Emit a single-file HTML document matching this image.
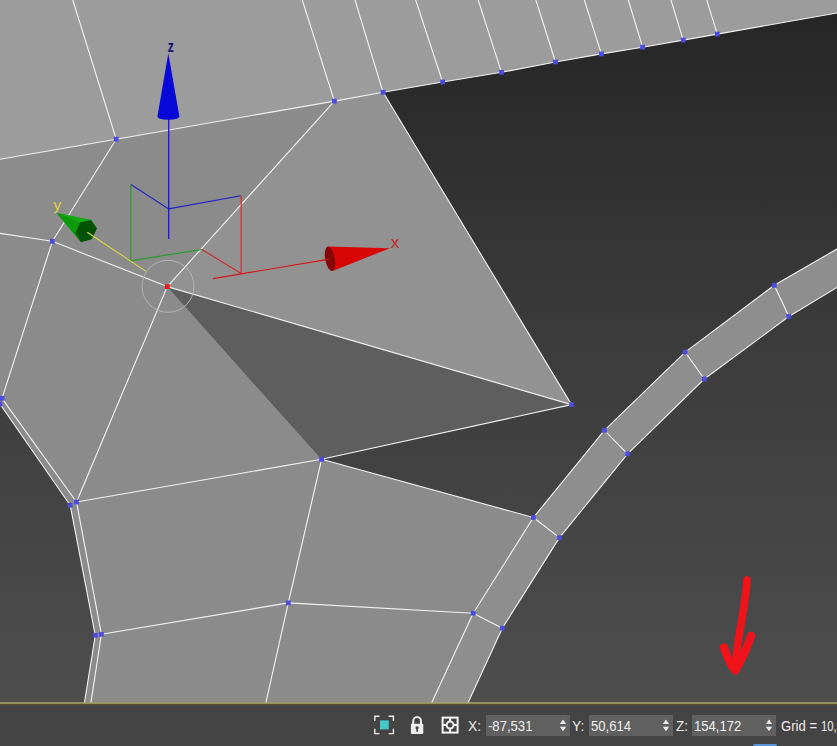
<!DOCTYPE html>
<html><head><meta charset="utf-8"><title>viewport</title>
<style>
html,body{margin:0;padding:0;background:#444;}
body{width:837px;height:746px;overflow:hidden;position:relative;font-family:"Liberation Sans",sans-serif;}
svg{position:absolute;left:0;top:0;display:block}
.bar{position:absolute;left:0;top:705px;width:837px;height:41px;background:#444444;}
.lbl{position:absolute;top:716.6px;height:18px;line-height:18px;font-size:14.4px;color:#ececec;white-space:nowrap;transform:scaleX(0.91);transform-origin:0 50%}
.box{position:absolute;top:714.6px;height:21.4px;background:#606060;box-sizing:border-box;white-space:nowrap}
.box span{position:absolute;left:2.4px;top:0;color:#f0f0f0;font-size:14.4px;line-height:22.4px;transform:scaleX(0.91);transform-origin:0 50%;display:block}
</style></head><body>
<svg width="837" height="746" viewBox="0 0 837 746">
<defs>
<linearGradient id="bg" x1="0" y1="0" x2="0" y2="703" gradientUnits="userSpaceOnUse">
<stop offset="0" stop-color="#252525"/><stop offset="0.47" stop-color="#3b3b3b"/><stop offset="1" stop-color="#4e4e4e"/></linearGradient>
</defs>
<rect x="0" y="0" width="837" height="704" fill="url(#bg)"/>

<polygon points="0.0,0.0 837.0,0.0 837.0,13.0 717.3,34.1 683.2,40.1 642.6,47.2 601.4,53.9 555.5,62.0 501.5,72.3 442.6,82.0 383.1,92.3 334.4,101.1 116.2,139.2 0.0,159.3" fill="#9c9c9c"/>
<polygon points="0.0,159.3 116.2,139.2 52.4,241.3 0.0,233.4" fill="#8c8c8c"/>
<polygon points="116.2,139.2 334.4,101.1 167.3,286.6 52.4,241.3" fill="#8b8b8b"/>
<polygon points="334.4,101.1 383.1,92.3 571.5,404.6 167.3,286.6" fill="#929292"/>
<polygon points="167.3,286.6 571.5,404.6 321.6,459.3" fill="#5e5e5e"/>
<polygon points="0.0,233.4 52.4,241.3 167.3,286.6 321.6,459.3 533.4,517.5 473.2,613.2 431.3,703.5 84.3,703.5 95.3,635.3 70.2,505.2 0.0,404.0" fill="#8b8b8b"/>
<polygon points="837.0,249.0 774.3,285.3 685.2,352.1 604.4,430.4 533.4,517.5 473.2,613.2 431.3,703.5 467.7,703.5 502.3,628.2 559.5,537.6 627.6,453.8 704.3,379.0 788.8,316.5 837.0,287.4" fill="#8e8e8e"/>
<g stroke="#f2f2f2" stroke-width="1.12" fill="none" stroke-linecap="round" stroke-linejoin="round">
<polyline points="0.0,159.3 116.2,139.2 334.4,101.1 383.1,92.3 442.6,82.0 501.5,72.3 555.5,62.0 601.4,53.9 642.6,47.2 683.2,40.1 717.3,34.1 837.0,13.0"/>
<polyline points="72.8,0.0 116.2,139.2"/>
<polyline points="302.3,0.0 334.4,101.1"/>
<polyline points="355.0,0.0 383.1,92.3"/>
<polyline points="415.7,0.0 442.6,82.0"/>
<polyline points="478.2,0.0 501.5,72.3"/>
<polyline points="535.9,0.0 555.5,62.0"/>
<polyline points="584.3,0.0 601.4,53.9"/>
<polyline points="628.3,0.0 642.6,47.2"/>
<polyline points="671.0,0.0 683.2,40.1"/>
<polyline points="706.8,0.0 717.3,34.1"/>
<polyline points="116.2,139.2 52.4,241.3 2.0,398.3 76.5,502.0 101.4,634.3 90.8,703.5"/>
<polyline points="0.0,404.0 70.2,505.2 95.3,635.3 84.3,703.5"/>
<polyline points="0.0,233.4 52.4,241.3 167.3,286.6 571.5,404.6 383.1,92.3"/>
<polyline points="334.4,101.1 167.3,286.6 76.5,502.0"/>
<polyline points="76.5,502.0 321.6,459.3 571.5,404.6"/>
<polyline points="321.6,459.3 533.4,517.5 604.4,430.4 685.2,352.1 774.3,285.3 837.0,249.0"/>
<polyline points="321.6,459.3 288.3,602.9 265.7,703.5"/>
<polyline points="101.4,634.3 288.3,602.9 473.2,613.2"/>
<polyline points="533.4,517.5 473.2,613.2 431.3,703.5"/>
<polyline points="837.0,287.4 788.8,316.5 704.3,379.0 627.6,453.8 559.5,537.6 502.3,628.2 467.7,703.5"/>
<polyline points="533.4,517.5 559.5,537.6"/>
<polyline points="604.4,430.4 627.6,453.8"/>
<polyline points="685.2,352.1 704.3,379.0"/>
<polyline points="774.3,285.3 788.8,316.5"/>
<polyline points="473.2,613.2 502.3,628.2"/>
</g>
<g fill="#4c4ce0">
<rect x="332.0" y="98.7" width="4.8" height="4.8"/>
<rect x="380.7" y="89.9" width="4.8" height="4.8"/>
<rect x="440.2" y="79.6" width="4.8" height="4.8"/>
<rect x="499.1" y="69.9" width="4.8" height="4.8"/>
<rect x="553.1" y="59.6" width="4.8" height="4.8"/>
<rect x="599.0" y="51.5" width="4.8" height="4.8"/>
<rect x="640.2" y="44.8" width="4.8" height="4.8"/>
<rect x="680.8" y="37.7" width="4.8" height="4.8"/>
<rect x="714.9" y="31.7" width="4.8" height="4.8"/>
<rect x="113.8" y="136.8" width="4.8" height="4.8"/>
<rect x="50.0" y="238.9" width="4.8" height="4.8"/>
<rect x="569.1" y="402.2" width="4.8" height="4.8"/>
<rect x="319.2" y="456.9" width="4.8" height="4.8"/>
<rect x="-0.4" y="395.9" width="4.8" height="4.8"/>
<rect x="-2.4" y="401.6" width="4.8" height="4.8"/>
<rect x="74.1" y="499.6" width="4.8" height="4.8"/>
<rect x="67.8" y="502.8" width="4.8" height="4.8"/>
<rect x="99.0" y="631.9" width="4.8" height="4.8"/>
<rect x="92.9" y="632.9" width="4.8" height="4.8"/>
<rect x="285.9" y="600.5" width="4.8" height="4.8"/>
<rect x="470.8" y="610.8" width="4.8" height="4.8"/>
<rect x="499.9" y="625.8" width="4.8" height="4.8"/>
<rect x="531.0" y="515.1" width="4.8" height="4.8"/>
<rect x="557.1" y="535.2" width="4.8" height="4.8"/>
<rect x="602.0" y="428.0" width="4.8" height="4.8"/>
<rect x="625.2" y="451.4" width="4.8" height="4.8"/>
<rect x="682.8" y="349.7" width="4.8" height="4.8"/>
<rect x="701.9" y="376.6" width="4.8" height="4.8"/>
<rect x="771.9" y="282.9" width="4.8" height="4.8"/>
<rect x="786.4" y="314.1" width="4.8" height="4.8"/>
</g>
<g fill="none" stroke-width="1.1">
<circle cx="168" cy="286.3" r="26" stroke="#b4b4b4" stroke-width="1"/>
<polyline points="130.8,184.5 168.7,208.9 240.9,195.8" stroke="#2020c8"/>
<line x1="168.7" y1="118" x2="168.7" y2="239" stroke="#1818d0" stroke-width="1.3"/>
<polyline points="130.8,184.5 130.8,260.8 201.8,249.5" stroke="#22a022"/>
<polyline points="201.8,249.5 241.2,273.4 241.2,195.8" stroke="#d02828"/>
<line x1="213" y1="278.6" x2="328" y2="259.4" stroke="#d81818"/>

</g>
<path d="M168.3,53.2 L179.4,116.5 Q179.6,119.5 168.4,119.8 Q157.2,119.5 157.4,116.5 Z" fill="#0808d8"/>
<polygon points="56.7,213 91,220.1 96.9,228.4 81,242.2" fill="#0a9a0a"/>
<polygon points="56.7,213 91,220.1 96.9,228.4 80.1,222.6" fill="#14aa14"/>
<polygon points="56.7,213 80.1,222.6 75.5,233 81,242.2" fill="#0a9a0a"/>
<polygon points="80.1,222.6 91,220.1 96.9,228.4 91.8,239.3 81,242.2 75.5,233" fill="#045204"/>
<polygon points="327.4,246.6 389.8,248.2 332.7,271" fill="#d80606"/>
<ellipse cx="330" cy="258.8" rx="4.8" ry="12.3" fill="#840808" transform="rotate(-10 330 258.8)"/>
<line x1="320" y1="260.7" x2="328.6" y2="259.2" stroke="#d81818" stroke-width="1.1"/>
<g font-family="Liberation Sans, sans-serif">
<text transform="translate(167.7 52) scale(0.72 1)" font-weight="bold" font-size="17px" fill="#14146c">z</text>
<text x="53.6" y="209.6" fill="#dcd440" font-size="15.5px">y</text>
<text x="390.7" y="248" fill="#c02c2c" font-size="17px">x</text>
</g>
<line x1="87.2" y1="232.2" x2="146" y2="271.4" stroke="#dcd448" stroke-width="1.1"/>
<rect x="164.9" y="284.2" width="4.8" height="4.8" fill="#e81818"/>

<g fill="none" stroke="#f0141a" stroke-width="7.6" stroke-linecap="round" stroke-linejoin="round">
<path d="M747,580 C745.5,600 741.5,622 738,642 C736.5,652 735.8,661 735.6,669.5"/>
<path d="M724,647.5 C727,657 731,665.5 735.4,670.5 C741,661 747,648 751,636" stroke-width="8.2"/>
</g>

<rect x="0" y="702.2" width="837" height="1.7" fill="#a49e62"/>
<rect x="0" y="703.9" width="837" height="1.4" fill="#5c4e2e"/>
<rect x="0" y="705" width="837" height="41" fill="#444444"/>
<g fill="none" stroke="#eeeeee" stroke-width="1.4">
<path d="M374.8,721 V716.2 H379.5 M388.6,716.2 H393.4 V721 M393.4,728.8 V733.6 H388.6 M379.5,733.6 H374.8 V728.8"/>
</g>
<rect x="380" y="720.4" width="8.8" height="9" fill="#46c8c8"/>
<g>
<path d="M413.2,724.6 V721.2 A3.9,4.2 0 0 1 421,721.2 V724.6" fill="none" stroke="#ececec" stroke-width="2"/>
<rect x="410.9" y="723.8" width="12.4" height="10.2" rx="1" fill="#ececec"/>
<circle cx="417.1" cy="727.8" r="1.6" fill="#444"/>
<rect x="416.3" y="728" width="1.6" height="3.8" fill="#444"/>
</g>
<g fill="none" stroke="#f4f4f4" stroke-width="2">
<rect x="442.6" y="717.6" width="15" height="15"/>
<circle cx="450.1" cy="725.1" r="3.5"/>
<path d="M450.1,717.6 V721.6 M450.1,728.6 V732.6 M442.6,725.1 H446.6 M453.6,725.1 H457.6"/>
</g>
<path d="M753,746.5 V746 Q753,744 755.2,744 H775 Q777.2,744 777.2,746 V746.5 Z" fill="#5b94d6"/>

</svg>
<div class="lbl" style="left:467.8px;transform:scaleX(0.96)">X:</div>
<div class="box" style="left:486px;width:84px"><span>-87,531</span></div><svg style="left:559px;top:718px" width="8" height="15" viewBox="0 0 8 15"><path d="M0.8,6 L4,1.6 L7.2,6 Z M0.8,8.8 L4,13.2 L7.2,8.8 Z" fill="#e8e8e8"/></svg>
<div class="lbl" style="left:572.2px;transform:scaleX(0.96)">Y:</div>
<div class="box" style="left:589px;width:84px"><span>50,614</span></div><svg style="left:662px;top:718px" width="8" height="15" viewBox="0 0 8 15"><path d="M0.8,6 L4,1.6 L7.2,6 Z M0.8,8.8 L4,13.2 L7.2,8.8 Z" fill="#e8e8e8"/></svg>
<div class="lbl" style="left:675.6px;transform:scaleX(0.94)">Z:</div>
<div class="box" style="left:692px;width:84px"><span>154,172</span></div><svg style="left:765px;top:718px" width="8" height="15" viewBox="0 0 8 15"><path d="M0.8,6 L4,1.6 L7.2,6 Z M0.8,8.8 L4,13.2 L7.2,8.8 Z" fill="#e8e8e8"/></svg>
<div class="lbl" style="left:781.2px">Grid = <span style="display:inline-block;transform:scaleX(0.86);transform-origin:0 50%;margin-left:0.6px">10,0</span></div>
</body></html>
